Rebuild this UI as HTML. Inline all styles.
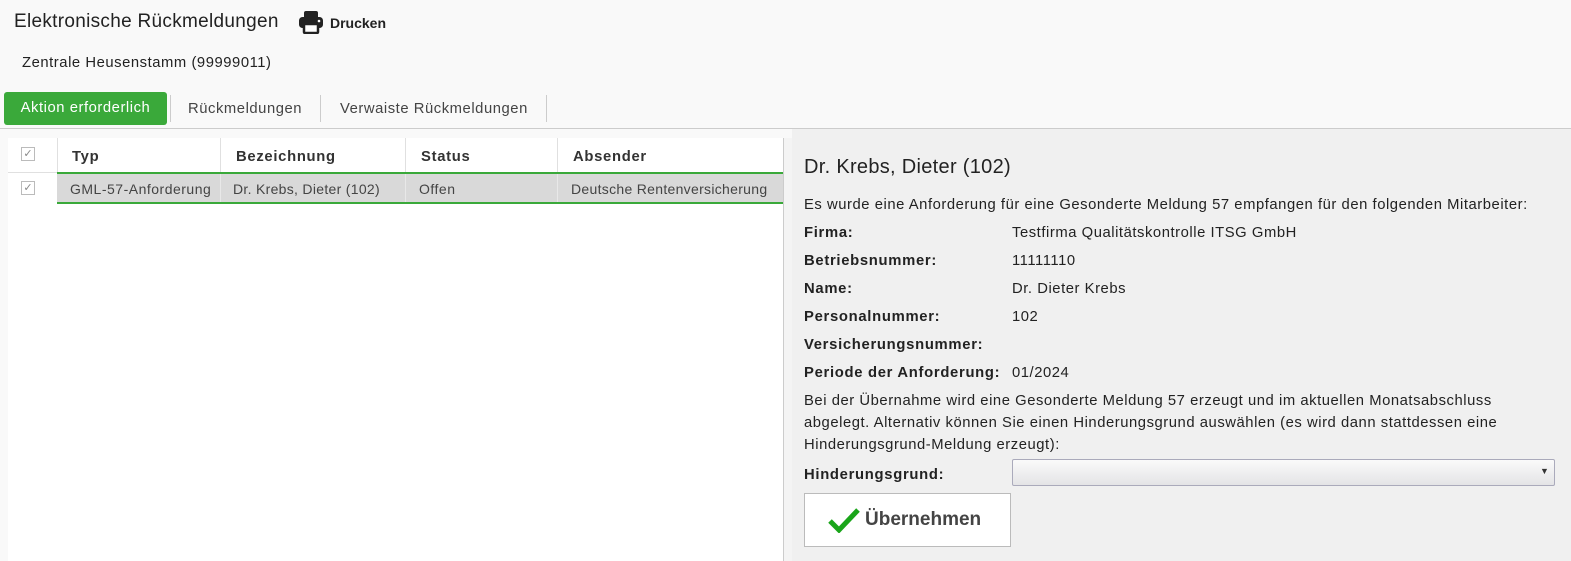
<!DOCTYPE html>
<html><head><meta charset="utf-8"><style>
*{margin:0;padding:0;box-sizing:border-box}
body{width:1571px;height:561px;overflow:hidden;background:#f9f9f9;font-family:"Liberation Sans",sans-serif;color:#222;position:relative}
.a{position:absolute;white-space:nowrap}
.t15{font-size:14.8px;letter-spacing:0.55px}
.bb{font-weight:bold;letter-spacing:0.7px}
</style></head><body>
<div class="a" style="left:14px;top:11px;font-size:19px;letter-spacing:0.3px;color:#222">Elektronische Rückmeldungen</div>
<svg class="a" style="left:298px;top:10px" width="26" height="24" viewBox="0 0 26 24"><rect x="6" y="1" width="14" height="8" rx="2" fill="#222"/><rect x="1" y="7" width="24" height="11" rx="3.5" fill="#222"/><rect x="6" y="14" width="14" height="9" rx="1" fill="#fff" stroke="#222" stroke-width="2.5"/><circle cx="21" cy="11" r="1.3" fill="#fff"/></svg>
<div class="a" style="left:330px;top:15px;font-size:14px;font-weight:bold">Drucken</div>
<div class="a t15" style="left:22px;top:55px">Zentrale Heusenstamm (99999011)</div>
<div class="a t15" style="left:4px;top:92px;width:163px;height:33px;background:#3aa93a;border-radius:3px;color:#fff;line-height:33px;text-align:center">Aktion erforderlich</div>
<div class="a" style="left:170px;top:95px;width:1px;height:27px;background:#ccc"></div>
<div class="a t15" style="left:188px;top:101px;color:#444">Rückmeldungen</div>
<div class="a" style="left:320px;top:95px;width:1px;height:27px;background:#ccc"></div>
<div class="a t15" style="left:340px;top:101px;color:#444">Verwaiste Rückmeldungen</div>
<div class="a" style="left:546px;top:95px;width:1px;height:27px;background:#ccc"></div>
<div class="a" style="left:0;top:128px;width:1571px;height:1px;background:#ccc"></div>
<div class="a" style="left:8px;top:138px;width:775px;height:423px;background:#fff"></div>
<div class="a" style="left:783px;top:138px;width:1px;height:423px;background:#ccc"></div>
<div class="a" style="left:784px;top:138px;width:8px;height:423px;background:#f4f4f4"></div>
<div class="a" style="left:8px;top:138px;width:775px;height:35px;border-bottom:1px solid #e0e0e0"></div>
<div class="a" style="left:57px;top:138px;width:1px;height:35px;background:#e0e0e0"></div>
<div class="a" style="left:220px;top:138px;width:1px;height:35px;background:#e0e0e0"></div>
<div class="a" style="left:405px;top:138px;width:1px;height:35px;background:#e0e0e0"></div>
<div class="a" style="left:557px;top:138px;width:1px;height:35px;background:#e0e0e0"></div>
<div class="a" style="left:21px;top:147px;width:14px;height:14px;border:1px solid #bbb;color:#888;font-size:11px;line-height:12px;text-align:center">✓</div>
<div class="a t15 bb" style="left:72px;top:149px;color:#333">Typ</div>
<div class="a t15 bb" style="left:236px;top:149px;color:#333">Bezeichnung</div>
<div class="a t15 bb" style="left:421px;top:149px;color:#333">Status</div>
<div class="a t15 bb" style="left:573px;top:149px;color:#333">Absender</div>
<div class="a" style="left:57px;top:172px;width:726px;height:32px;background:#d9d9d9;border-top:2px solid #3aa93a;border-bottom:2px solid #3aa93a"></div>
<div class="a" style="left:220px;top:174px;width:1px;height:28px;background:#e8e8e8"></div>
<div class="a" style="left:405px;top:174px;width:1px;height:28px;background:#e8e8e8"></div>
<div class="a" style="left:557px;top:174px;width:1px;height:28px;background:#e8e8e8"></div>
<div class="a" style="left:21px;top:181px;width:14px;height:14px;border:1px solid #bbb;color:#888;font-size:11px;line-height:12px;text-align:center;background:#fff">✓</div>
<div class="a" style="left:70px;top:181px;width:140px;overflow:hidden;font-size:14px;letter-spacing:0.5px;color:#444">GML-57-Anforderung</div>
<div class="a" style="left:233px;top:181px;font-size:14px;letter-spacing:0.3px;color:#444">Dr. Krebs, Dieter (102)</div>
<div class="a" style="left:419px;top:181px;font-size:14px;letter-spacing:0.5px;color:#444">Offen</div>
<div class="a" style="left:571px;top:181px;font-size:14px;letter-spacing:0.3px;color:#444">Deutsche Rentenversicherung</div>
<div class="a" style="left:792px;top:129px;width:779px;height:432px;background:#f0f0f0"></div>
<div class="a" style="left:804px;top:156px;font-size:20px;letter-spacing:0.3px;color:#222">Dr. Krebs, Dieter (102)</div>
<div class="a t15" style="left:804px;top:197px">Es wurde eine Anforderung für eine Gesonderte Meldung 57 empfangen für den folgenden Mitarbeiter:</div>
<div class="a t15 bb" style="left:804px;top:225px">Firma:</div><div class="a t15" style="left:1012px;top:225px">Testfirma Qualitätskontrolle ITSG GmbH</div>
<div class="a t15 bb" style="left:804px;top:253px">Betriebsnummer:</div><div class="a t15" style="left:1012px;top:253px">11111110</div>
<div class="a t15 bb" style="left:804px;top:281px">Name:</div><div class="a t15" style="left:1012px;top:281px">Dr. Dieter Krebs</div>
<div class="a t15 bb" style="left:804px;top:309px">Personalnummer:</div><div class="a t15" style="left:1012px;top:309px">102</div>
<div class="a t15 bb" style="left:804px;top:337px">Versicherungsnummer:</div>
<div class="a t15 bb" style="left:804px;top:365px">Periode der Anforderung:</div><div class="a t15" style="left:1012px;top:365px">01/2024</div>
<div class="a t15" style="left:804px;top:390px;line-height:22px;white-space:normal;width:725px">Bei der Übernahme wird eine Gesonderte Meldung 57 erzeugt und im aktuellen Monatsabschluss abgelegt. Alternativ können Sie einen Hinderungsgrund auswählen (es wird dann stattdessen eine Hinderungsgrund-Meldung erzeugt):</div>
<div class="a t15 bb" style="left:804px;top:467px">Hinderungsgrund:</div>
<div class="a" style="left:1012px;top:459px;width:543px;height:27px;border:1px solid #aab;border-radius:2px;background:linear-gradient(#fafafa,#e4e4e6)"></div>
<div class="a" style="left:1540px;top:466px;font-size:9px;color:#333">▼</div>
<div class="a" style="left:804px;top:493px;width:207px;height:54px;border:1px solid #bbb;background:#fff"></div>
<svg class="a" style="left:828px;top:507px" width="32" height="26" viewBox="0 0 32 26"><path d="M2 14 L11 23 L30 3" fill="none" stroke="#1aa51a" stroke-width="5"/></svg>
<div class="a" style="left:865px;top:509px;font-size:19px;font-weight:bold;color:#444">Übernehmen</div>
</body></html>
